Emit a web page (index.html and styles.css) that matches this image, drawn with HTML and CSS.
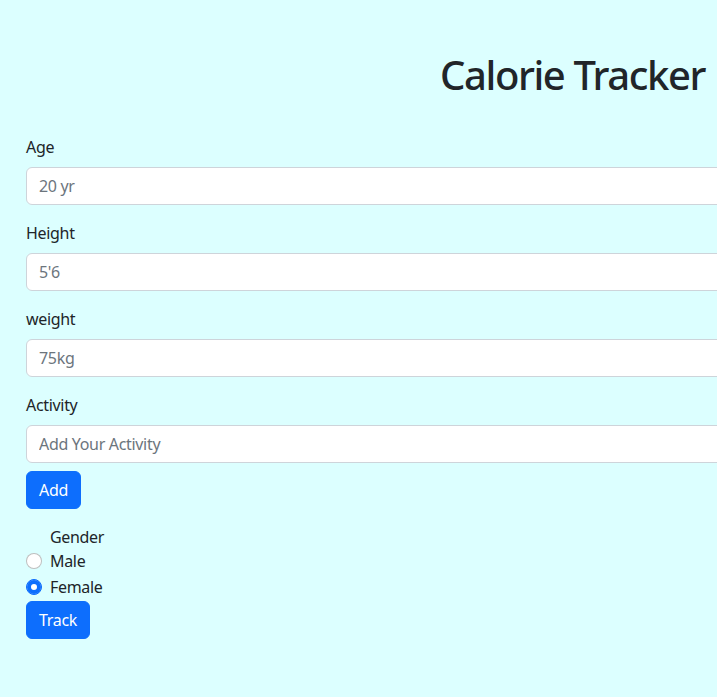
FILE: index.html
```html
<!DOCTYPE html>
<html lang="en">
<head>
<meta charset="utf-8">
<title>Calorie Tracker</title>
<link rel="stylesheet" href="styles.css">
</head>
<body>
<main class="page">
  <h1 class="title">Calorie Tracker</h1>
  <form class="form">
    <div class="field">
      <label class="label" for="age">Age</label>
      <input class="input" id="age" type="text" placeholder="20 yr">
    </div>
    <div class="field">
      <label class="label" for="height">Height</label>
      <input class="input" id="height" type="text" placeholder="5'6">
    </div>
    <div class="field">
      <label class="label" for="weight">weight</label>
      <input class="input" id="weight" type="text" placeholder="75kg">
    </div>
    <div class="field">
      <label class="label" for="activity">Activity</label>
      <input class="input" id="activity" type="text" placeholder="Add Your Activity">
      <button type="button" class="btn btn-add">Add</button>
    </div>
    <div class="gender">
      <div class="check check-head"><span class="check-label">Gender</span></div>
      <label class="check">
        <input class="radio" type="radio" name="gender" value="male">
        <span class="check-label">Male</span>
      </label>
      <label class="check">
        <input class="radio" type="radio" name="gender" value="female" checked>
        <span class="check-label">Female</span>
      </label>
    </div>
    <button type="button" class="btn">Track</button>
  </form>
</main>
</body>
</html>
```

FILE: styles.css
```css
html {
  overflow-x: hidden;
  background: #dcffff;
}
body {
  margin: 0;
  background: #dcffff;
  font-family: "Noto Sans", "Open Sans", sans-serif;
  font-size: 16px;
  line-height: 24px;
  letter-spacing: -0.02em;
  color: #212529;
}
.page {
  width: 1093px;
  padding: 51px 0 40px 26px;
}
.title {
  margin: 0 0 36px;
  text-align: center;
  font-size: 40px;
  line-height: 48px;
  font-weight: 500;
  letter-spacing: -0.035em;
}
.form {
  display: flex;
  flex-direction: column;
  align-items: flex-start;
}
.field {
  width: 100%;
  margin-bottom: 16px;
  display: flex;
  flex-direction: column;
  align-items: flex-start;
}
.label {
  margin-bottom: 8px;
}
.input {
  box-sizing: border-box;
  width: 100%;
  height: 38px;
  padding: 6px 12px;
  border: 1px solid #ced4da;
  border-radius: 6px;
  background: #fff;
  font: inherit;
  letter-spacing: inherit;
  color: #212529;
}
.input::placeholder {
  color: #6c757d;
}
.btn {
  font: inherit;
  letter-spacing: inherit;
  color: #fff;
  background: #0d6efd;
  border: 1px solid #0d6efd;
  border-radius: 6px;
  padding: 6px 12px;
  line-height: 24px;
  cursor: pointer;
}
.btn-add {
  margin-top: 8px;
}
.gender {
  display: flex;
  flex-direction: column;
}
.check {
  display: flex;
  align-items: flex-start;
  min-height: 24px;
  margin-bottom: 2px;
  padding-left: 24px;
  position: relative;
}
.check-head {
  margin-bottom: 0;
}
.radio {
  appearance: none;
  position: absolute;
  left: 0;
  top: 4px;
  width: 16px;
  height: 16px;
  margin: 0;
  box-sizing: border-box;
  border: 1px solid rgba(0, 0, 0, 0.25);
  border-radius: 50%;
  background: #fff;
}
.radio:checked {
  background: #0d6efd;
  border-color: #0d6efd;
  box-shadow: inset 0 0 0 4px #0d6efd, inset 0 0 0 8px #fff;
}
```
